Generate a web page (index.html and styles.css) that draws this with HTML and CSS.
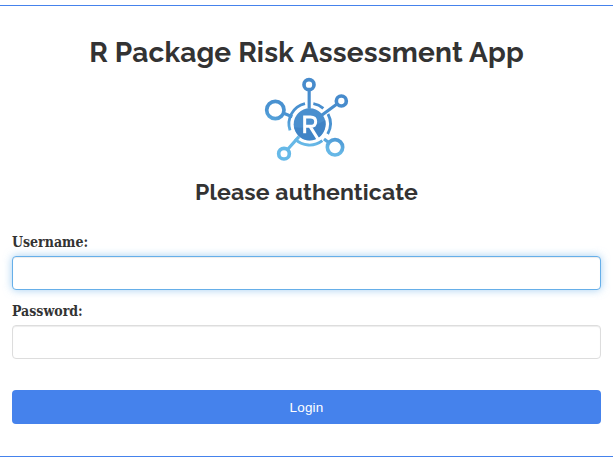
FILE: index.html
```html
<!DOCTYPE html>
<html lang="en">
<head>
<meta charset="utf-8">
<title>R Package Risk Assessment App</title>
<link rel="stylesheet" href="styles.css">
</head>
<body>
<main class="panel">
  <h1 class="title">R Package Risk Assessment App</h1>
  <svg class="logo" viewBox="0 0 315 300" aria-hidden="true">
    <defs>
      <linearGradient id="blue" gradientUnits="userSpaceOnUse" x1="190" y1="70" x2="120" y2="260">
        <stop offset="0" stop-color="#478bcc"/>
        <stop offset=".5" stop-color="#4a94d2"/>
        <stop offset=".72" stop-color="#66b7e6"/>
        <stop offset="1" stop-color="#66b9e8"/>
      </linearGradient>
    </defs>
    <g fill="none" stroke="url(#blue)" stroke-width="11">
      <circle cx="162" cy="44" r="15"/>
      <circle cx="259" cy="93" r="15"/>
      <circle cx="61" cy="120" r="26"/>
      <circle cx="87" cy="251" r="16"/>
      <circle cx="240" cy="232" r="23"/>
      <path d="M162.500 60V116M245 103L198 137M86 130L112 140M99 237L132 200M220 217L207 207" stroke-width="9.500"/>
      <path d="M150 101A62 62 0 0 0 105 181M175 101A62 62 0 0 1 205 115M219 132A62 62 0 0 1 218 192M120 207A62 62 0 0 0 202 212" stroke-width="8.500"/>
    </g>
    <circle cx="164" cy="163" r="48" fill="#4a8fce"/>
    <path d="M117 172Q165 178 211 151Q215 176 198 196Q180 214 157 211Q126 205 117 172Z" fill="#4084c6"/>
    <path d="M149 190V141H166Q182 141 182 155Q182 169 166 169H149M165 169L190 209" fill="none" stroke="#fff" stroke-width="9"/>
  </svg>
  <h2 class="subtitle">Please authenticate</h2>
  <form class="form">
    <label class="label" for="user">Username:</label>
    <input class="field active" id="user" type="text">
    <label class="label second" for="pass">Password:</label>
    <input class="field" id="pass" type="password">
    <button class="login" type="button">Login</button>
  </form>
</main>
</body>
</html>
```
FILE: styles.css
```css
* { box-sizing: border-box; }
body { margin: 0; background: #fff; color: #333; overflow: hidden; }
.panel {
  display: flex;
  flex-direction: column;
  height: 452px;
  margin-top: 5px;
  padding: 30px 12px 0;
  border-top: 1px solid #4582ec;
  border-bottom: 1px solid #4582ec;
}
.title, .subtitle {
  margin: 0;
  font-family: Raleway, Lato, sans-serif;
  font-weight: 700;
  text-align: center;
  white-space: nowrap;
}
.title { height: 34px; font-size: 28px; line-height: 34px; letter-spacing: 0.18px; }
.logo { width: 105px; height: 100px; margin-left: 2px; align-self: center; }
.subtitle { height: 26px; margin-top: 9px; font-size: 23px; line-height: 26px; letter-spacing: 0.14px; }
.form { display: flex; flex-direction: column; margin-top: 28px; }
.label {
  height: 20px;
  margin-bottom: 3px;
  font: bold 14px/18px "DejaVu Serif Condensed", "DejaVu Serif", serif;
}
.second { margin-top: 12px; }
.field {
  width: 100%;
  height: 34px;
  padding: 6px 12px;
  border: 1px solid #ddd;
  border-radius: 4px;
  background: #fff;
  outline: 0;
  box-shadow: inset 0 1px 1px rgba(0, 0, 0, .075);
}
.active {
  border-color: #66afe9;
  box-shadow: inset 0 1px 1px rgba(0, 0, 0, .075), 0 0 8px rgba(102, 175, 233, .6);
}
.login {
  height: 34px;
  margin-top: 31px;
  padding: 1px 0 0;
  border: 0;
  border-radius: 4px;
  background: #4582ec;
  color: #fff;
  font: 13.500px/33px "Liberation Sans", sans-serif;
  letter-spacing: 0.2px;
}
```
